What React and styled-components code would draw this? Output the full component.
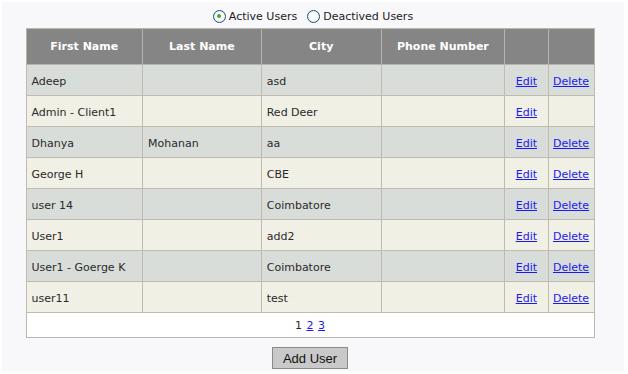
import styled, { createGlobalStyle } from 'styled-components'

const GlobalStyle = createGlobalStyle`
  body {
    margin: 0;
    background: #ffffff;
    font-family: "DejaVu Sans", Verdana, sans-serif;
  }
`

const Panel = styled.div`
  margin: 2px 4px 3px 2px;
  height: 369px;
  background: #f8f7f9;
  display: flex;
  flex-direction: column;
  align-items: center;
`

const RadioBar = styled.div`
  height: 24px;
  flex-shrink: 0;
  display: flex;
  align-items: center;
  gap: 10px;
  padding-top: 2px;
  font-size: 11px;
  color: #222;
`

const RadioLabel = styled.label`
  display: flex;
  align-items: center;
  gap: 3px;
`

const RadioDot = styled.span`
  width: 11px;
  height: 11px;
  border-radius: 50%;
  border: 1px solid #1c5180;
  background: radial-gradient(circle, #ffffff 40%, #dcdcd6 100%);
  display: flex;
  align-items: center;
  justify-content: center;
  &::after {
    content: '';
    width: 4px;
    height: 4px;
    border-radius: 50%;
    background: ${(p) => (p.$checked ? '#2bb42b' : 'transparent')};
  }
`

const Table = styled.table`
  width: 569px;
  margin-left: -6px;
  border-collapse: collapse;
  font-size: 11px;
  color: #2a2a2a;
  border: 1px solid #b9b6b0;
`

const HeadCell = styled.th`
  height: 35px;
  padding: 0;
  background: #858585;
  color: #ffffff;
  font-weight: bold;
  border: 1px solid #b8b3aa;
  border-top: none;
  width: ${(p) => p.$w}px;
`

const Row = styled.tr`
  background: ${(p) =>
    p.$odd
      ? '#d9ddd9'
      : 'repeating-linear-gradient(0deg, #efeee2 0px, #efeee2 1px, #f3f2e8 1px, #f3f2e8 2px)'};
`

const Cell = styled.td`
  height: 28px;
  padding: 2px 0 0 ${(p) => (p.$center ? 0 : 5)}px;
  border: 1px solid #c1bbaf;
  text-align: ${(p) => (p.$center ? 'center' : 'left')};
`

const ActionLink = styled.a`
  color: #1a1aee;
  text-decoration: underline;
  cursor: pointer;
`

const PagerCell = styled.td`
  height: 22px;
  background: #ffffff;
  text-align: center;
  border: 1px solid #b9b6b0;
  word-spacing: 1px;
`

const Button = styled.button`
  margin-top: 9px;
  margin-left: -6px;
  width: 76px;
  height: 22px;
  flex-shrink: 0;
  background: #c9c9c9;
  border: 1px solid #8a8a8a;
  font-family: "Liberation Sans", Arial, sans-serif;
  font-size: 13px;
  color: #111;
  padding: 0;
`

const columns = [
  { title: 'First Name', w: 117 },
  { title: 'Last Name', w: 119 },
  { title: 'City', w: 120 },
  { title: 'Phone Number', w: 124 },
  { title: '', w: 43 },
  { title: '', w: 45 },
]

const users = [
  { first: 'Adeep', last: '', city: 'asd', del: true },
  { first: 'Admin - Client1', last: '', city: 'Red Deer', del: false },
  { first: 'Dhanya', last: 'Mohanan', city: 'aa', del: true },
  { first: 'George H', last: '', city: 'CBE', del: true },
  { first: 'user 14', last: '', city: 'Coimbatore', del: true },
  { first: 'User1', last: '', city: 'add2', del: true },
  { first: 'User1 - Goerge K', last: '', city: 'Coimbatore', del: true },
  { first: 'user11', last: '', city: 'test', del: true },
]

export default function App() {
  return (
    <>
      <GlobalStyle />
      <Panel>
        <RadioBar>
          <RadioLabel>
            <RadioDot $checked />
            Active Users
          </RadioLabel>
          <RadioLabel>
            <RadioDot />
            Deactived Users
          </RadioLabel>
        </RadioBar>
        <Table>
          <thead>
            <tr>
              {columns.map((c, i) => (
                <HeadCell key={i} $w={c.w}>
                  {c.title}
                </HeadCell>
              ))}
            </tr>
          </thead>
          <tbody>
            {users.map((u, i) => (
              <Row key={i} $odd={i % 2 === 0}>
                <Cell>{u.first}</Cell>
                <Cell>{u.last}</Cell>
                <Cell>{u.city}</Cell>
                <Cell></Cell>
                <Cell $center>
                  <ActionLink>Edit</ActionLink>
                </Cell>
                <Cell $center>{u.del && <ActionLink>Delete</ActionLink>}</Cell>
              </Row>
            ))}
            <tr>
              <PagerCell colSpan={6}>
                1 <ActionLink>2</ActionLink> <ActionLink>3</ActionLink>
              </PagerCell>
            </tr>
          </tbody>
        </Table>
        <Button>Add User</Button>
      </Panel>
    </>
  )
}
